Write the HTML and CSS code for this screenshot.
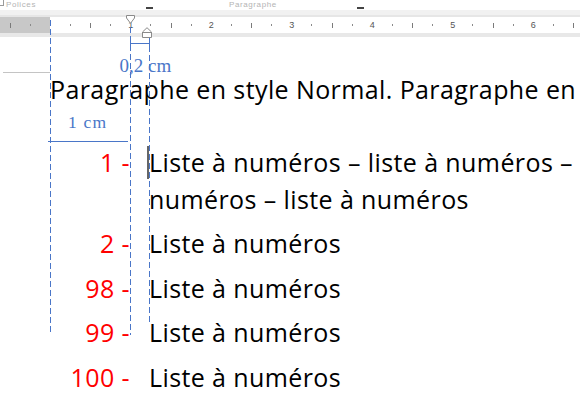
FILE: index.html
```html
<!DOCTYPE html>
<html lang="fr">
<head>
<meta charset="utf-8">
<title>Liste à numéros</title>
<link rel="stylesheet" href="styles.css">
</head>
<body>
<div class="page">
  <header class="chrome">
    <div class="ribbon">
      <span class="corner"></span>
      <span class="grp grp-polices">Polices</span>
      <span class="launch launch-1"></span>
      <span class="grp grp-para">Paragraphe</span>
      <span class="launch launch-2"></span>
    </div>
    <div class="band"></div>
    <div class="ruler">
      <span class="cell"><i class="tick"></i></span>
      <span class="cell"><i class="dot"></i></span>
      <span class="cell"></span>
      <span class="cell"><i class="dot"></i></span>
      <span class="cell"><i class="tick"></i></span>
      <span class="cell"><i class="dot"></i></span>
      <span class="cell"><b class="n">1</b></span>
      <span class="cell"><i class="dot"></i></span>
      <span class="cell"><i class="tick"></i></span>
      <span class="cell"><i class="dot"></i></span>
      <span class="cell"><b class="n">2</b></span>
      <span class="cell"><i class="dot"></i></span>
      <span class="cell"><i class="tick"></i></span>
      <span class="cell"><i class="dot"></i></span>
      <span class="cell"><b class="n">3</b></span>
      <span class="cell"><i class="dot"></i></span>
      <span class="cell"><i class="tick"></i></span>
      <span class="cell"><i class="dot"></i></span>
      <span class="cell"><b class="n">4</b></span>
      <span class="cell"><i class="dot"></i></span>
      <span class="cell"><i class="tick"></i></span>
      <span class="cell"><i class="dot"></i></span>
      <span class="cell"><b class="n">5</b></span>
      <span class="cell"><i class="dot"></i></span>
      <span class="cell"><i class="tick"></i></span>
      <span class="cell"><i class="dot"></i></span>
      <span class="cell"><b class="n">6</b></span>
      <span class="cell"><i class="dot"></i></span>
      <span class="cell"><i class="tick"></i></span>
    </div>
    <div class="band-low"></div>
  </header>

  <main class="doc">
    <p class="normal">Paragraphe en style Normal. Paragraphe en</p>
    <ol class="list">
      <li class="item"><span class="num">1 -</span><span class="txt">Liste à numéros – liste à numéros –<br>numéros – liste à numéros</span></li>
      <li class="item"><span class="num">2 -</span><span class="txt">Liste à numéros</span></li>
      <li class="item"><span class="num">98 -</span><span class="txt">Liste à numéros</span></li>
      <li class="item"><span class="num">99 -</span><span class="txt">Liste à numéros</span></li>
      <li class="item"><span class="num">100 -</span><span class="txt">Liste à numéros</span></li>
    </ol>
  </main>

  <div class="overlay">
    <span class="grayline"></span>
    <span class="vline v-margin"></span>
    <span class="vline v-first"></span>
    <span class="vline v-hang"></span>
    <span class="dim02"></span>
    <span class="lbl lbl02">0,2 cm</span>
    <span class="lbl lbl1">1 cm</span>
    <span class="hline1"></span>
    <svg class="mk mk-first" width="9" height="9" viewBox="0 0 9 9"><path d="M0.5 0.5 H8.5 V3 L4.5 8.3 L0.5 3 Z" fill="#fff" stroke="#8a8a8a" stroke-width="1"/></svg>
    <svg class="mk mk-hang" width="10" height="11" viewBox="0 0 10 11"><path d="M0.5 10.5 V5 L5 0.7 L9.5 5 V10.5 Z M0.5 5.5 H9.5" fill="#fff" stroke="#8a8a8a" stroke-width="1"/></svg>
    <span class="caret"></span>
  </div>
</div>
</body>
</html>
```
FILE: styles.css
```css
* { box-sizing: border-box; }
html, body { margin: 0; padding: 0; background: #fff; }
body { width: 580px; height: 408px; overflow: hidden; }

.page {
  position: relative;
  width: 580px;
  height: 408px;
  overflow: hidden;
  font-family: "Open Sans", "Noto Sans", sans-serif;
}

/* ribbon & ruler */
.chrome { display: flex; flex-direction: column; }
.ribbon {
  height: 10px;
  display: flex;
  align-items: center;
  background: #fff;
  font-family: "Liberation Sans", sans-serif;
}
.corner {
  align-self: flex-start;
  width: 4px; height: 6px;
  border: 1px solid #9a9a9a;
  border-left: none; border-top: none;
  flex: none;
}
.grp { font-size: 8px; line-height: 10px; color: #b4b4b4; white-space: nowrap; letter-spacing: 0.6px; }
.grp-polices { margin-left: 2px; }
.launch { align-self: flex-end; width: 7px; height: 2px; background: #444; margin-bottom: 1px; flex: none; }
.launch-1 { margin-left: 110px; }
.grp-para { margin-left: 76px; }
.launch-2 { margin-left: 80px; }

.band { height: 7px; background: #f1f1f1; border-bottom: 2px solid #e6e6e6; }
.ruler {
  height: 16px;
  display: flex;
  overflow: hidden;
  background: linear-gradient(to right, #c8c8c8 0 50px, #fff 50px);
}
.cell {
  flex: 0 0 20.125px;
  display: flex;
  align-items: center;
  justify-content: center;
}
.tick { display: block; width: 1px; height: 5px; background: #7a7a7a; }
.dot { display: block; width: 1px; height: 2px; background: #8a8a8a; }
.n { font-family: "Liberation Sans", sans-serif; font-weight: normal; font-size: 9px; line-height: 9px; color: #555; }
.band-low { height: 4px; background: #e8e8e8; }

/* document */
.doc { color: #000; font-size: 25px; line-height: 37px; letter-spacing: 0.4px; }
.normal { margin: 38.3px 0 0 50px; line-height: 28px; white-space: nowrap; }
.list { list-style: none; margin: 40.5px 0 0 0; padding: 0; }
.item {
  display: grid;
  grid-template-columns: 130px 1fr;
  column-gap: 19px;
  margin-bottom: 7.5px;
  white-space: nowrap;
}
.num { color: #ff0000; text-align: right; }

/* overlays */
.overlay { position: absolute; inset: 0; pointer-events: none; }
.vline {
  position: absolute;
  width: 1px;
  background: repeating-linear-gradient(to bottom, #4a76c8 0 6px, transparent 6px 9px);
}
.v-margin { left: 50px; top: 20px; height: 313px; }
.v-first { left: 130px; top: 27px; height: 308px; }
.v-hang { left: 149px; top: 37px; height: 285px; }
.grayline { position: absolute; left: 3px; top: 72px; width: 47px; height: 1px; background: #c4c4c4; }
.dim02 {
  position: absolute; left: 130px; top: 40px; width: 20px; height: 7px;
  border-left: 1px solid #4a76c8; border-right: 1px solid #4a76c8;
}
.dim02::after {
  content: ""; position: absolute; left: 0; right: 0; top: 3px; height: 1px; background: #4a76c8;
}
.lbl { position: absolute; font-family: "Liberation Serif", serif; color: #4a76c8; white-space: nowrap; }
.lbl02 { left: 119.5px; top: 59px; font-size: 19px; line-height: 14px; }
.lbl1 { left: 68px; top: 113.5px; font-size: 17.5px; line-height: 17.5px; letter-spacing: 1.2px; }
.hline1 { position: absolute; left: 48px; top: 141px; width: 80px; height: 1px; background: #4a76c8; }
.mk { position: absolute; display: block; }
.mk-first { left: 126px; top: 15px; }
.mk-hang { left: 142px; top: 27px; }
.caret { position: absolute; left: 147px; top: 146px; width: 2px; height: 33px; background: #666; }
```
